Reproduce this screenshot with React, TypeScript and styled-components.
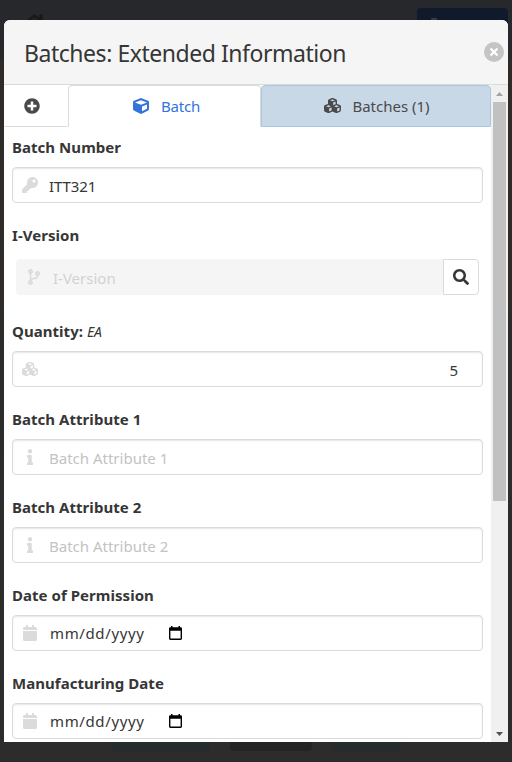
import React from "react";
import styled, { createGlobalStyle, css } from "styled-components";
import {
  FaCalendar,
  FaCodeBranch,
  FaCube,
  FaHome,
  FaInfo,
  FaKey,
  FaPlusCircle,
  FaSearch,
} from "react-icons/fa";
import { FaCubes } from "react-icons/fa6";

const GlobalStyle = createGlobalStyle`
  *, *::before, *::after { box-sizing: border-box; }
  html, body { margin: 0; height: 100%; overflow: hidden; }
  body {
    background: #2c2c2c;
    color: #363636;
    font-family: "Segoe UI", "Noto Sans", sans-serif;
    font-size: 15px;
    line-height: 24px;
  }
`;

const Screen = styled.div`
  position: relative;
  width: 512px;
  height: 762px;
  padding: 20px 4px;
  overflow: hidden;
  background: linear-gradient(#27282b 0 56px, #2e2b29 60px 300px, #2c2c2c 480px);
`;

const HomeGlyph = styled(FaHome)`
  position: absolute;
  left: 23px;
  top: 12px;
  font-size: 23px;
  color: #17181a;
`;

const BackdropButton = styled.div<{ $x: number; $y: number; $w: number; $h: number; $tone: string }>`
  position: absolute;
  left: ${(p) => p.$x}px;
  top: ${(p) => p.$y}px;
  width: ${(p) => p.$w}px;
  height: ${(p) => p.$h}px;
  border-radius: 4px;
  background: ${(p) => p.$tone};
`;

const Modal = styled.section`
  position: relative;
  display: flex;
  flex-direction: column;
  height: 722px;
  overflow: hidden;
  border-radius: 6px 6px 0 0;
  background: #fff;
`;

const Header = styled.header`
  display: flex;
  flex: none;
  align-items: center;
  justify-content: space-between;
  height: 65px;
  padding: 0 4px 0 20px;
  border-bottom: 1px solid #dbdbdb;
  background: #f5f5f5;
`;

const Title = styled.h1`
  margin: 2px 0 0;
  font-size: 23px;
  font-weight: 400;
  line-height: 24px;
  letter-spacing: -0.46px;
  white-space: nowrap;
`;

const CloseButton = styled.button`
  display: flex;
  align-items: center;
  justify-content: center;
  width: 20px;
  height: 20px;
  padding: 0;
  border: 0;
  border-radius: 50%;
  background: #c4c4c4;
`;

const Body = styled.div`
  display: flex;
  flex: 1;
  min-height: 0;
`;

const Content = styled.div`
  flex: 1;
  min-width: 0;
  overflow: hidden;
`;

const Tabs = styled.nav`
  display: flex;
  height: 42px;
`;

const Tab = styled.button<{ $width: number; $kind: "add" | "active" | "tinted" }>`
  display: flex;
  flex: none;
  align-items: center;
  justify-content: center;
  gap: 12px;
  width: ${(p) => p.$width}px;
  padding: 0 0 1px;
  border: 1px solid transparent;
  background: #fff;
  color: #4a4a4a;
  font: inherit;
  white-space: nowrap;
  svg { font-size: 16px; }
  ${(p) => p.$kind === "add" && css`
    border-bottom-color: #dbdbdb;
    padding-right: 8px;
  `}
  ${(p) => p.$kind === "active" && css`
    border-color: #dbdbdb;
    border-bottom-color: transparent;
    border-radius: 4px 4px 0 0;
    padding-left: 4px;
    color: #3273dc;
  `}
  ${(p) => p.$kind === "tinted" && css`
    border-color: #a9c6e3;
    border-radius: 4px 4px 0 0;
    padding-left: 2px;
    gap: 11px;
    background: #c8d8e7;
    svg { font-size: 17px; }
  `}
`;

const TabLabel = styled.span<{ $spacing: number }>`
  letter-spacing: ${(p) => p.$spacing}px;
`;

const Form = styled.form`
  display: flex;
  flex-direction: column;
  gap: 20px;
  padding: 8px;
`;

const Field = styled.div`
  flex: none;
`;

const Label = styled.label`
  display: block;
  height: 24px;
  margin-bottom: 8px;
  font-weight: 700;
  letter-spacing: 0.04px;
  white-space: nowrap;
`;

const Unit = styled.em`
  font-size: 14px;
  font-weight: 400;
  letter-spacing: -0.2px;
`;

const Control = styled.div<{ $disabled?: boolean }>`
  display: flex;
  flex: 1;
  align-items: center;
  height: 36px;
  padding-right: 24px;
  border: 1px solid ${(p) => (p.$disabled ? "#f5f5f5" : "#dbdbdb")};
  border-radius: ${(p) => (p.$disabled ? "4px 0 0 4px" : "4px")};
  background: ${(p) => (p.$disabled ? "#f5f5f5" : "#fff")};
  box-shadow: ${(p) => (p.$disabled ? "none" : "inset 0 1px 2px rgba(10, 10, 10, 0.1)")};
`;

const IconSlot = styled.span`
  display: flex;
  flex: none;
  justify-content: center;
  width: 36px;
  margin: 0 1px 0 -1px;
  color: #dbdbdb;
  font-size: 16px;
`;

const Value = styled.span<{ $tone?: "placeholder" | "disabled"; $spacing?: number; $end?: boolean }>`
  flex: ${(p) => (p.$end ? 1 : "none")};
  text-align: ${(p) => (p.$end ? "right" : "left")};
  padding-top: 1px;
  color: ${(p) => (p.$tone === "placeholder" ? "#c3c3c3" : p.$tone === "disabled" ? "#d2d2d2" : "#363636")};
  letter-spacing: ${(p) => p.$spacing ?? 0}px;
  white-space: nowrap;
`;

const DateValue = styled(Value)`
  width: 120px;
  padding: 0 0 0 1px;
`;

const Addons = styled.div`
  display: flex;
  padding: 4px;
`;

const SearchButton = styled.button`
  display: flex;
  align-items: center;
  justify-content: center;
  width: 36px;
  height: 36px;
  padding: 0;
  border: 1px solid #dbdbdb;
  border-radius: 0 4px 4px 0;
  background: #fff;
  color: #363636;
  font-size: 16px;
`;

const Scrollbar = styled.div`
  display: flex;
  flex: none;
  flex-direction: column;
  align-items: center;
  width: 17px;
  background: #f0f0f0;
`;

const Arrow = styled.span`
  display: flex;
  align-items: center;
  justify-content: center;
  height: 17px;
`;

const Thumb = styled.div`
  width: 13px;
  height: 399px;
  margin-bottom: auto;
  background: #c1c1c1;
`;

function DatePickerIcon() {
  return (
    <svg width="13" height="14" viewBox="0 0 13 14" fill="#000">
      <path fillRule="evenodd" d="M2 0h1.5v1.2h6V0H11v1.2h.7A1.3 1.3 0 0 1 13 2.5v10a1.4 1.4 0 0 1-1.4 1.4H1.4A1.4 1.4 0 0 1 0 12.5v-10a1.3 1.3 0 0 1 1.3-1.3H2zM1.4 4.7v7.9h10.2V4.7z" />
    </svg>
  );
}

function TextField(props: { label: string; icon: React.ReactNode; children: React.ReactNode; unit?: string }) {
  return (
    <Field>
      <Label>
        {props.label}
        {props.unit && <> <Unit>{props.unit}</Unit></>}
      </Label>
      <Control>
        <IconSlot>{props.icon}</IconSlot>
        {props.children}
      </Control>
    </Field>
  );
}

function DateField({ label }: { label: string }) {
  return (
    <TextField label={label} icon={<FaCalendar />}>
      <DateValue $spacing={0.62}>mm/dd/yyyy</DateValue>
      <DatePickerIcon />
    </TextField>
  );
}

export default function App() {
  return (
    <>
      <GlobalStyle />
      <Screen>
        <HomeGlyph />
        <BackdropButton $x={417} $y={8} $w={91} $h={36} $tone="#111a2b" />
        <BackdropButton $x={431} $y={18} $w={6} $h={2} $tone="#343b49" />
        <BackdropButton $x={111} $y={715} $w={99} $h={36} $tone="#262b2d" />
        <BackdropButton $x={230} $y={715} $w={82} $h={36} $tone="#242424" />
        <BackdropButton $x={332} $y={715} $w={69} $h={36} $tone="#262b2d" />
        <Modal>
          <Header>
            <Title>Batches: Extended Information</Title>
            <CloseButton aria-label="Close">
              <svg width="8" height="8" viewBox="0 0 8 8" stroke="#fff" strokeWidth="2.2">
                <path d="M.5.5l7 7M7.5.5l-7 7" />
              </svg>
            </CloseButton>
          </Header>
          <Body>
            <Content>
              <Tabs>
                <Tab $width={64} $kind="add"><FaPlusCircle /></Tab>
                <Tab $width={193} $kind="active">
                  <FaCube />
                  <TabLabel $spacing={-0.2}>Batch</TabLabel>
                </Tab>
                <Tab $width={230} $kind="tinted">
                  <FaCubes />
                  <TabLabel $spacing={0}>Batches (1)</TabLabel>
                </Tab>
              </Tabs>
              <Form>
                <TextField label="Batch Number" icon={<FaKey />}>
                  <Value $spacing={-0.1}>ITT321</Value>
                </TextField>
                <Field>
                  <Label>I-Version</Label>
                  <Addons>
                    <Control $disabled>
                      <IconSlot><FaCodeBranch /></IconSlot>
                      <Value $tone="disabled">I-Version</Value>
                    </Control>
                    <SearchButton aria-label="Search"><FaSearch /></SearchButton>
                  </Addons>
                </Field>
                <TextField label="Quantity:" unit="EA" icon={<FaCubes />}>
                  <Value $end>5</Value>
                </TextField>
                <TextField label="Batch Attribute 1" icon={<FaInfo />}>
                  <Value $tone="placeholder">Batch Attribute 1</Value>
                </TextField>
                <TextField label="Batch Attribute 2" icon={<FaInfo />}>
                  <Value $tone="placeholder">Batch Attribute 2</Value>
                </TextField>
                <DateField label="Date of Permission" />
                <DateField label="Manufacturing Date" />
              </Form>
            </Content>
            <Scrollbar>
              <Arrow>
                <svg width="7" height="4" viewBox="0 0 7 4"><path d="M0 4L3.5 0 7 4z" fill="#a3a3a3" /></svg>
              </Arrow>
              <Thumb />
              <Arrow>
                <svg width="7" height="4" viewBox="0 0 7 4"><path d="M0 0L3.5 4 7 0z" fill="#505050" /></svg>
              </Arrow>
            </Scrollbar>
          </Body>
        </Modal>
      </Screen>
    </>
  );
}
